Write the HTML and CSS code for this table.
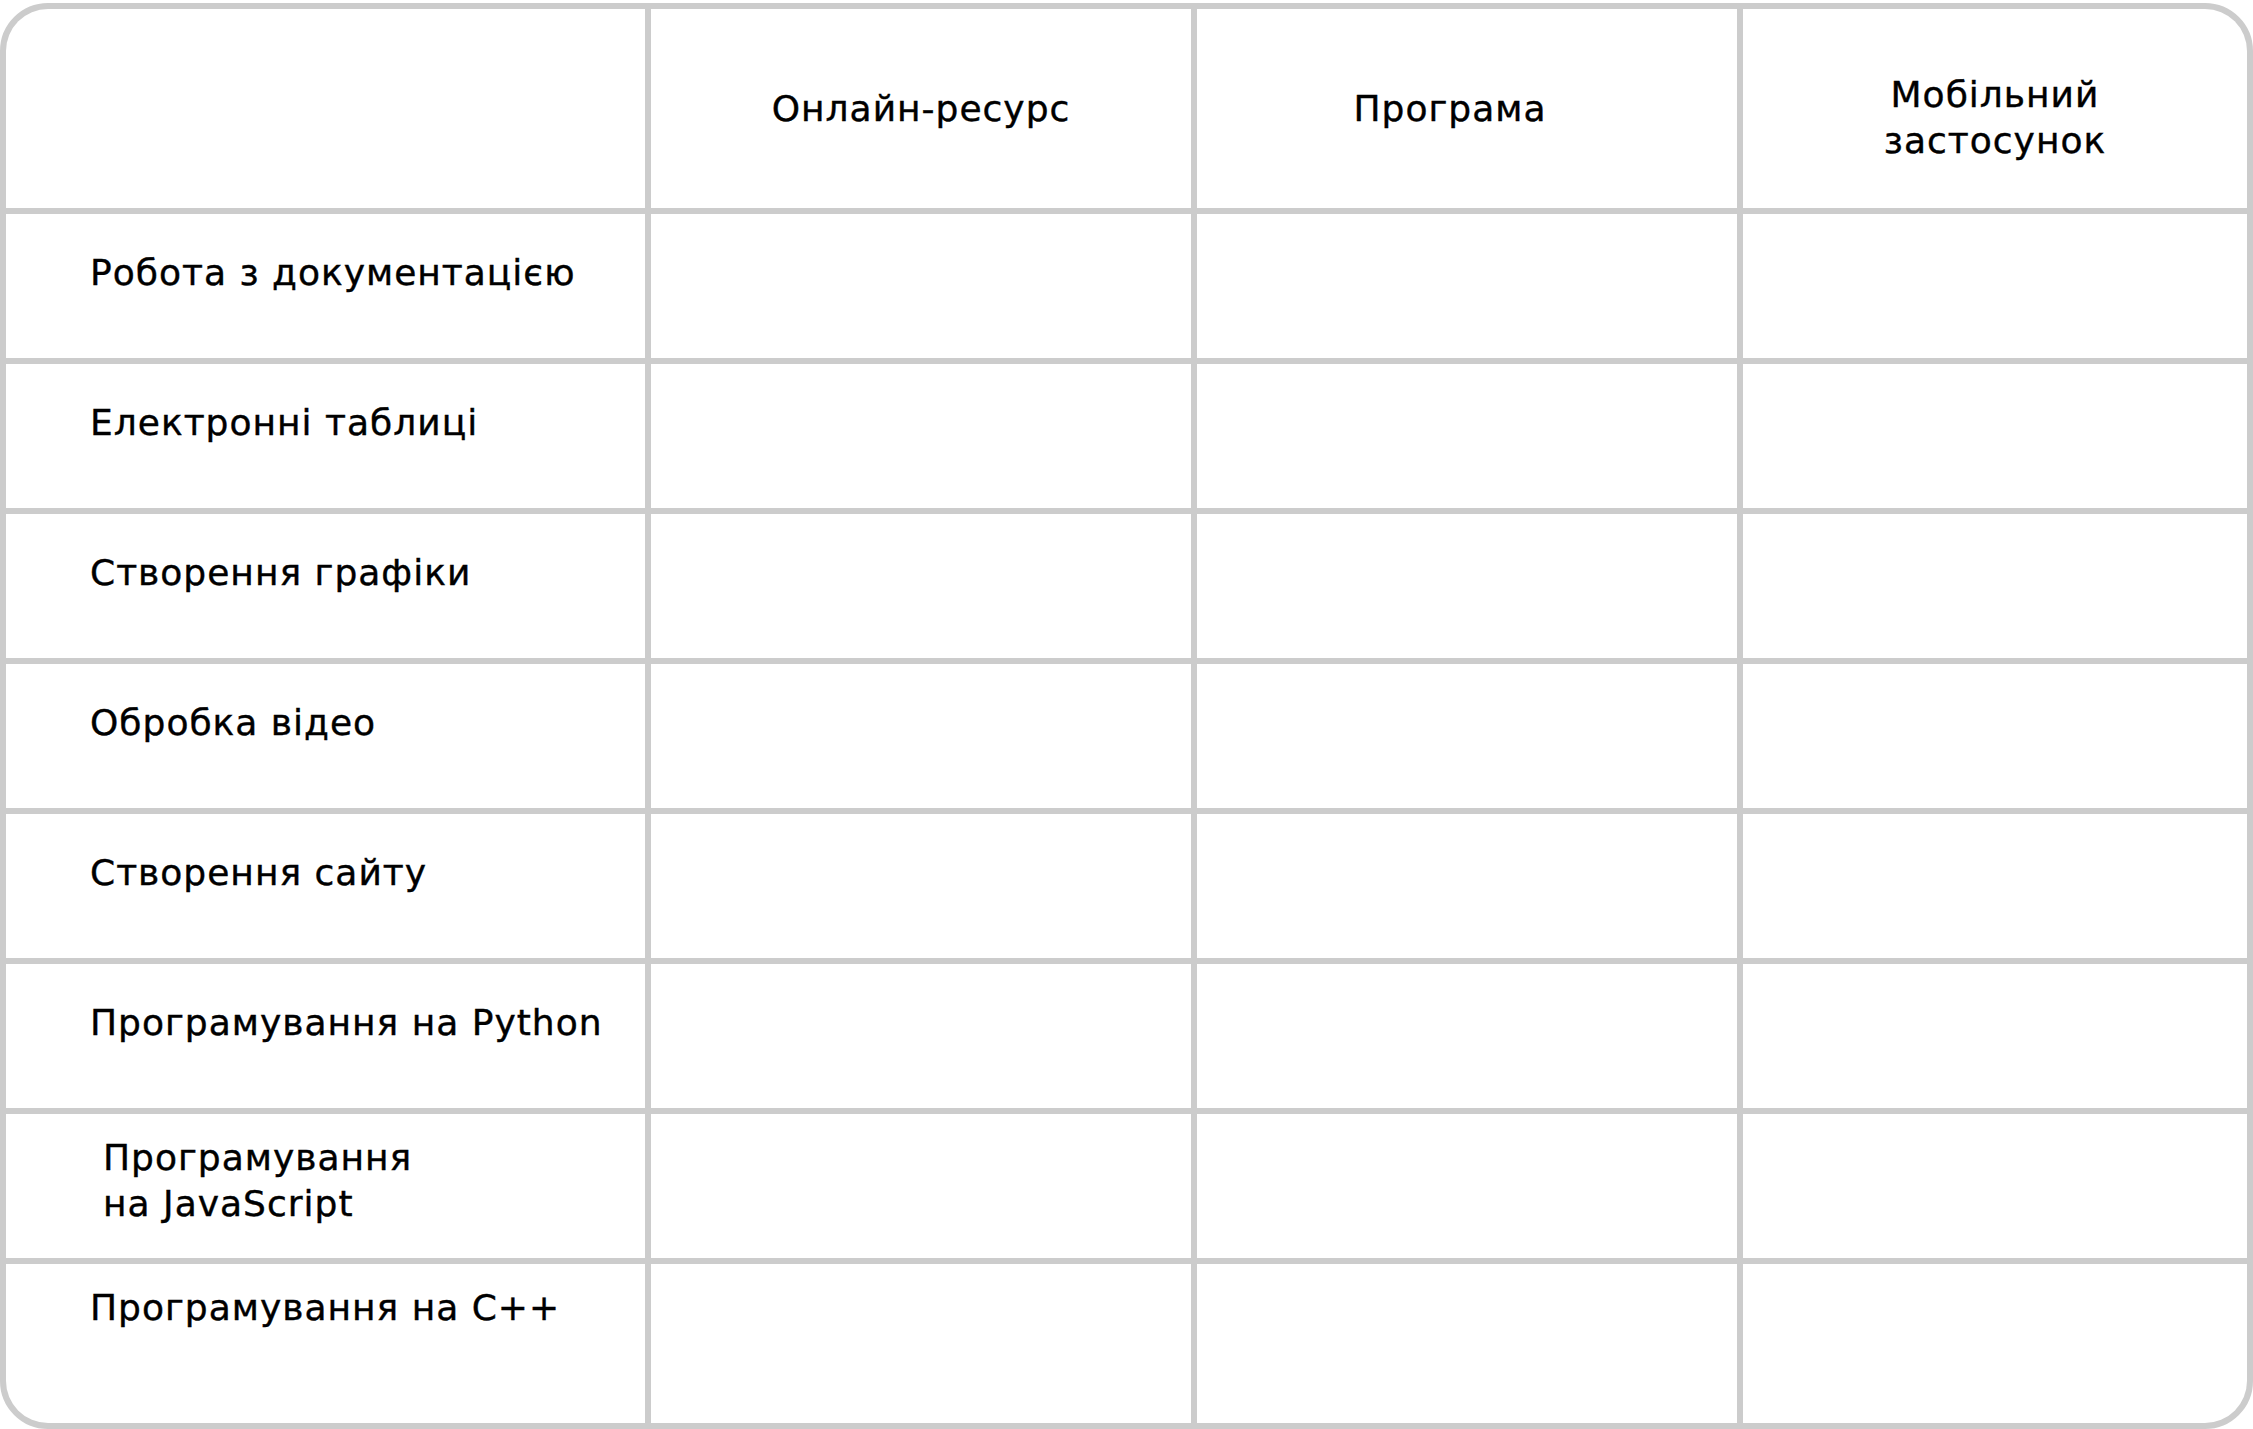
FILE: index.html
```html
<!DOCTYPE html>
<html lang="uk">
<head>
<meta charset="utf-8">
<title>Таблиця</title>
<link rel="stylesheet" href="styles.css">
</head>
<body>
<div class="sheet">
  <div class="cell head"></div>
  <div class="cell head">Онлайн-ресурс</div>
  <div class="cell head head-shift">Програма</div>
  <div class="cell head head-low">Мобільний<br>застосунок</div>

  <div class="cell label">Робота з документацією</div>
  <div class="cell"></div><div class="cell"></div><div class="cell"></div>

  <div class="cell label">Електронні таблиці</div>
  <div class="cell"></div><div class="cell"></div><div class="cell"></div>

  <div class="cell label">Створення графіки</div>
  <div class="cell"></div><div class="cell"></div><div class="cell"></div>

  <div class="cell label">Обробка відео</div>
  <div class="cell"></div><div class="cell"></div><div class="cell"></div>

  <div class="cell label">Створення сайту</div>
  <div class="cell"></div><div class="cell"></div><div class="cell"></div>

  <div class="cell label">Програмування на Python</div>
  <div class="cell"></div><div class="cell"></div><div class="cell"></div>

  <div class="cell label label-two">Програмування<br>на JavaScript</div>
  <div class="cell"></div><div class="cell"></div><div class="cell"></div>

  <div class="cell label label-last">Програмування на С++</div>
  <div class="cell"></div><div class="cell"></div><div class="cell"></div>
</div>
</body>
</html>
```
FILE: styles.css
```css
html, body {
  margin: 0;
  padding: 0;
  background: #ffffff;
}

body {
  padding-top: 3px;
  font-family: "DejaVu Sans", "Noto Sans", sans-serif;
  color: #000000;
}

.sheet {
  box-sizing: border-box;
  width: 2253px;
  height: 1426px;
  border: 6px solid #cccccc;
  border-radius: 48px;
  overflow: hidden;
  background: #cccccc;
  display: grid;
  grid-template-columns: 639px 540px 540px 504px;
  grid-template-rows: 199px repeat(7, 144px) 1fr;
  gap: 6px;
}

.cell {
  background: #ffffff;
  font-size: 36px;
  font-weight: 400;
  line-height: 46px;
  letter-spacing: 1px;
  -webkit-text-stroke: 0.4px #000000;
}

.head {
  display: flex;
  align-items: center;
  justify-content: center;
  text-align: center;
}

.head-shift {
  padding-right: 34px;
}

.head-low {
  padding-top: 18px;
}

.label {
  padding: 36px 0 0 84px;
}

.label-two {
  padding: 21px 0 0 97px;
}

.label-last {
  padding-top: 21px;
}
```
